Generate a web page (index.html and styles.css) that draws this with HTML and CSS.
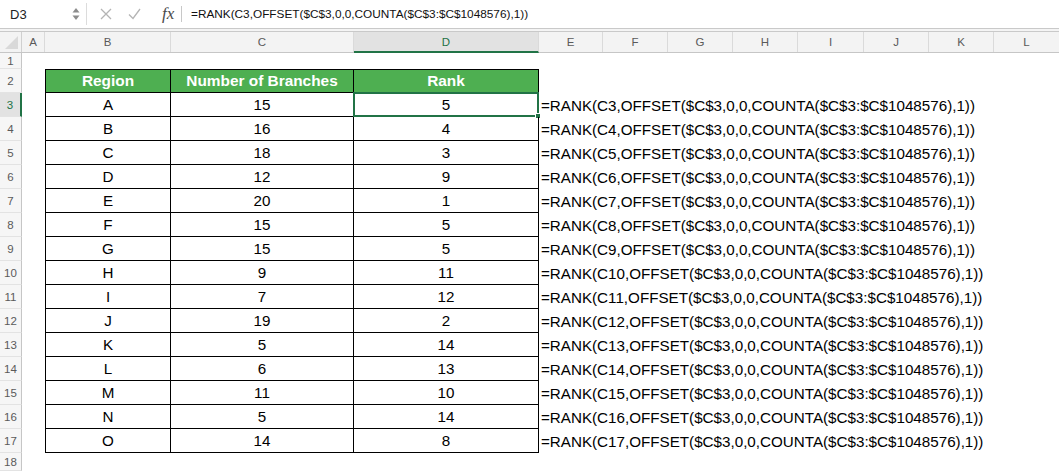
FILE: index.html
```html
<!DOCTYPE html>
<html>
<head>
<meta charset="utf-8">
<link rel="stylesheet" href="styles.css">
</head>
<body>
<div class="app">
  <div class="fbar">
    <div class="namebox">
      <span class="nb-text">D3</span>
      <span class="nb-arrows">
        <svg width="8" height="14" viewBox="0 0 8 14"><path d="M4 1 L7.5 5.5 L0.5 5.5 Z" fill="#8c8c8c"/><path d="M4 13 L7.5 8.5 L0.5 8.5 Z" fill="#8c8c8c"/></svg>
      </span>
    </div>
    <div class="fb-sep"></div>
    <div class="fb-icons">
      <svg class="ic-x" width="12" height="12" viewBox="0 0 12 12"><path d="M1 1 L11 11 M11 1 L1 11" stroke="#b4b4b4" stroke-width="1.3" fill="none"/></svg>
      <svg class="ic-ok" width="13" height="12" viewBox="0 0 13 12"><path d="M1 6.5 L5 10.5 L12 1" stroke="#b4b4b4" stroke-width="1.3" fill="none"/></svg>
      <span class="fx">fx</span>
    </div>
    <div class="fb-line"></div>
    <div class="fb-formula">=RANK(C3,OFFSET($C$3,0,0,COUNTA($C$3:$C$1048576),1))</div>
  </div>
  <div class="divider"></div>

  <div class="colhead">
    <div class="corner"><svg width="16" height="16" viewBox="0 0 16 16"><path d="M15 2 L15 15 L2 15 Z" fill="#d9d9d9"/></svg></div>
    <div class="ch">A</div>
    <div class="ch">B</div>
    <div class="ch">C</div>
    <div class="ch sel">D</div>
    <div class="ch">E</div>
    <div class="ch">F</div>
    <div class="ch">G</div>
    <div class="ch">H</div>
    <div class="ch">I</div>
    <div class="ch">J</div>
    <div class="ch">K</div>
    <div class="ch last">L</div>
  </div>

  <div class="row r1"><div class="rh">1</div><div></div><div></div><div></div><div></div><div></div></div>

  <div class="row head"><div class="rh">2</div><div></div>
    <div class="c b th">Region</div><div class="c th">Number of Branches</div><div class="c th">Rank</div><div></div></div>

  <div class="row"><div class="rh sel">3</div><div></div>
    <div class="c b">A</div><div class="c">15</div><div class="c active">5<span class="sel-box"><span class="handle"></span></span></div><div class="f">=RANK(C3,OFFSET($C$3,0,0,COUNTA($C$3:$C$1048576),1))</div></div>
  <div class="row"><div class="rh">4</div><div></div>
    <div class="c b">B</div><div class="c">16</div><div class="c">4</div><div class="f">=RANK(C4,OFFSET($C$3,0,0,COUNTA($C$3:$C$1048576),1))</div></div>
  <div class="row"><div class="rh">5</div><div></div>
    <div class="c b">C</div><div class="c">18</div><div class="c">3</div><div class="f">=RANK(C5,OFFSET($C$3,0,0,COUNTA($C$3:$C$1048576),1))</div></div>
  <div class="row"><div class="rh">6</div><div></div>
    <div class="c b">D</div><div class="c">12</div><div class="c">9</div><div class="f">=RANK(C6,OFFSET($C$3,0,0,COUNTA($C$3:$C$1048576),1))</div></div>
  <div class="row"><div class="rh">7</div><div></div>
    <div class="c b">E</div><div class="c">20</div><div class="c">1</div><div class="f">=RANK(C7,OFFSET($C$3,0,0,COUNTA($C$3:$C$1048576),1))</div></div>
  <div class="row"><div class="rh">8</div><div></div>
    <div class="c b">F</div><div class="c">15</div><div class="c">5</div><div class="f">=RANK(C8,OFFSET($C$3,0,0,COUNTA($C$3:$C$1048576),1))</div></div>
  <div class="row"><div class="rh">9</div><div></div>
    <div class="c b">G</div><div class="c">15</div><div class="c">5</div><div class="f">=RANK(C9,OFFSET($C$3,0,0,COUNTA($C$3:$C$1048576),1))</div></div>
  <div class="row"><div class="rh">10</div><div></div>
    <div class="c b">H</div><div class="c">9</div><div class="c">11</div><div class="f">=RANK(C10,OFFSET($C$3,0,0,COUNTA($C$3:$C$1048576),1))</div></div>
  <div class="row"><div class="rh">11</div><div></div>
    <div class="c b">I</div><div class="c">7</div><div class="c">12</div><div class="f">=RANK(C11,OFFSET($C$3,0,0,COUNTA($C$3:$C$1048576),1))</div></div>
  <div class="row"><div class="rh">12</div><div></div>
    <div class="c b">J</div><div class="c">19</div><div class="c">2</div><div class="f">=RANK(C12,OFFSET($C$3,0,0,COUNTA($C$3:$C$1048576),1))</div></div>
  <div class="row"><div class="rh">13</div><div></div>
    <div class="c b">K</div><div class="c">5</div><div class="c">14</div><div class="f">=RANK(C13,OFFSET($C$3,0,0,COUNTA($C$3:$C$1048576),1))</div></div>
  <div class="row"><div class="rh">14</div><div></div>
    <div class="c b">L</div><div class="c">6</div><div class="c">13</div><div class="f">=RANK(C14,OFFSET($C$3,0,0,COUNTA($C$3:$C$1048576),1))</div></div>
  <div class="row"><div class="rh">15</div><div></div>
    <div class="c b">M</div><div class="c">11</div><div class="c">10</div><div class="f">=RANK(C15,OFFSET($C$3,0,0,COUNTA($C$3:$C$1048576),1))</div></div>
  <div class="row"><div class="rh">16</div><div></div>
    <div class="c b">N</div><div class="c">5</div><div class="c">14</div><div class="f">=RANK(C16,OFFSET($C$3,0,0,COUNTA($C$3:$C$1048576),1))</div></div>
  <div class="row"><div class="rh">17</div><div></div>
    <div class="c b">O</div><div class="c">14</div><div class="c">8</div><div class="f">=RANK(C17,OFFSET($C$3,0,0,COUNTA($C$3:$C$1048576),1))</div></div>

  <div class="row r18"><div class="rh">18</div><div></div><div></div><div></div><div></div><div></div></div>
</div>
</body>
</html>
```

FILE: styles.css
```css
* { box-sizing: border-box; }
html, body { margin: 0; padding: 0; background: #fff; }
body { width: 1059px; height: 471px; overflow: hidden; font-family: "Liberation Sans", Arial, sans-serif; }

.app { width: 1059px; }

/* formula bar */
.fbar { height: 29px; display: flex; align-items: center; background: #fff; border-bottom: 1px solid #c9c9c9; }
.namebox { width: 86px; height: 29px; display: flex; align-items: center; justify-content: space-between; padding: 0 6px 0 10px; }
.nb-text { font-size: 13px; color: #222; }
.nb-arrows { display: flex; align-items: center; }
.fb-sep { width: 1px; height: 22px; background: #dcdcdc; }
.fb-icons { display: flex; align-items: center; width: 94px; height: 29px; padding-left: 13px; }
.ic-x { margin-right: 16px; }
.ic-ok { margin-right: 21px; }
.fx { font-family: "Liberation Serif", "Times New Roman", serif; font-style: italic; font-size: 17px; color: #4a4a4a; }
.fb-line { width: 1px; height: 16px; background: #c8c8c8; }
.fb-formula { padding-left: 9px; font-size: 11.8px; color: #111; white-space: nowrap; }
.divider { height: 3px; border-bottom: 1px solid #c9c9c9; background: #f4f4f4; }

/* column header */
.colhead { display: grid; grid-template-columns: 22px 23px 126px 183px 185px 64px 65px 65px 65px 66px 65px 65px 65px; height: 21px; background: #f3f3f3; border-bottom: 1px solid #c6c6c6; }
.corner { border-right: 1px solid #d0d0d0; display: flex; align-items: flex-end; justify-content: flex-end; padding: 0 2px 2px 0; }
.ch { display: flex; align-items: center; justify-content: center; font-size: 11.5px; color: #5a5a5a; border-right: 1px solid #dadada; }
.ch.last { border-right: none; }
.ch.sel { background: #e2e2e2; color: #217346; border-bottom: 2px solid #217346; margin-bottom: -1px; }

/* rows */
.row { display: grid; grid-template-columns: 22px 23px 126px 183px 185px 1fr; height: 24px; }
.row.r1 { height: 16px; }
.row.r18 { height: 18px; }
.rh { display: flex; align-items: center; justify-content: center; font-size: 11.5px; color: #5a5a5a; background: #f6f6f6; border-right: 1px solid #c6c6c6; border-bottom: 1px solid #e3e3e3; }
.rh.sel { background: #e2e2e2; color: #217346; border-right: 2px solid #217346; }

.c { display: flex; align-items: center; justify-content: center; font-size: 15.2px; color: #000; border-right: 1px solid #000; border-bottom: 1px solid #000; position: relative; }
.c.b { border-left: 1px solid #000; }
.head .c { border-top: 1px solid #000; }
.th { background: #4eaf51; color: #fff; font-weight: bold; font-size: 15.4px; }

.f { display: flex; align-items: center; padding-left: 2px; font-size: 15.2px; color: #000; white-space: nowrap; overflow: visible; }

.sel-box { position: absolute; left: -1px; top: -1px; right: -1px; bottom: -1px; border: 2px solid #217346; pointer-events: none; }
.handle { position: absolute; right: -4px; bottom: -4px; width: 6px; height: 6px; background: #217346; border: 1px solid #fff; }
```
